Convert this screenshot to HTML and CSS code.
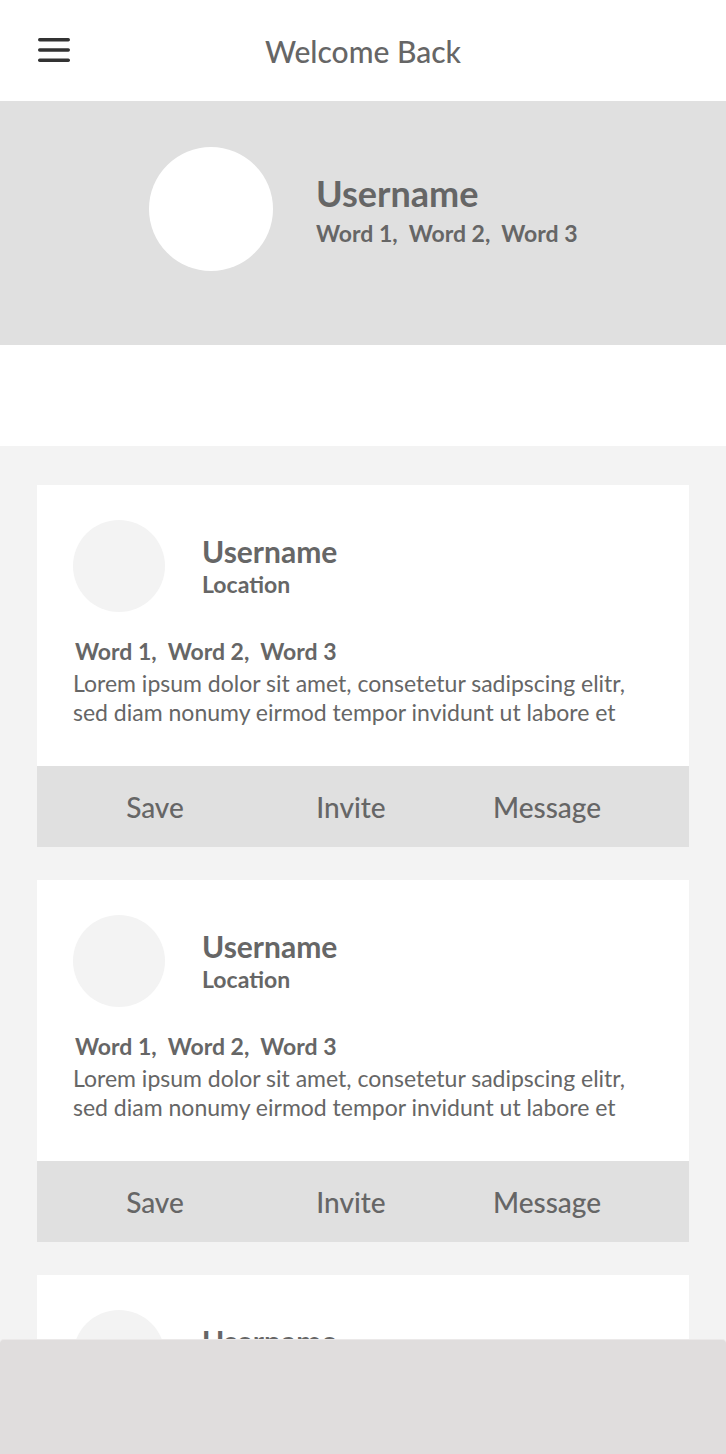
FILE: index.html
```html
<!DOCTYPE html>
<html lang="en">
<head>
  <meta charset="UTF-8" />
  <meta name="viewport" content="width=device-width, initial-scale=1.0" />
  <title>Welcome Back</title>
  <link rel="stylesheet" href="styles.css">
</head>
<body>
  <!-- Top bar -->
  <header class="topbar">
    <button class="menu-btn" aria-label="Menu">
      <svg width="32" height="26" viewBox="0 0 32 26">
        <rect x="0" y="1" width="32" height="3.4" rx="1.7" fill="#333" />
        <rect x="0" y="11.3" width="32" height="3.4" rx="1.7" fill="#333" />
        <rect x="0" y="21.6" width="32" height="3.4" rx="1.7" fill="#333" />
      </svg>
    </button>
    <div class="title">Welcome Back</div>
  </header>

  <!-- Profile -->
  <section class="profile">
    <div class="profile-avatar"></div>
    <div class="profile-info">
      <div class="profile-name">Username</div>
      <div class="profile-tags">Word 1,&nbsp; Word 2,&nbsp; Word 3</div>
    </div>
  </section>

  <div class="spacer"></div>

  <!-- Feed -->
  <main class="feed">
    <div class="card">
      <div class="card-body">
        <div class="card-head">
          <div class="avatar"></div>
          <div>
            <div class="name">Username</div>
            <div class="location">Location</div>
          </div>
        </div>
        <div class="tags">Word 1,&nbsp; Word 2,&nbsp; Word 3</div>
        <p class="desc">Lorem ipsum dolor sit amet, consetetur sadipscing elitr, sed diam nonumy eirmod tempor invidunt ut labore et</p>
      </div>
      <div class="actions">
        <span>Save</span>
        <span>Invite</span>
        <span>Message</span>
      </div>
    </div>

    <div class="card">
      <div class="card-body">
        <div class="card-head">
          <div class="avatar"></div>
          <div>
            <div class="name">Username</div>
            <div class="location">Location</div>
          </div>
        </div>
        <div class="tags">Word 1,&nbsp; Word 2,&nbsp; Word 3</div>
        <p class="desc">Lorem ipsum dolor sit amet, consetetur sadipscing elitr, sed diam nonumy eirmod tempor invidunt ut labore et</p>
      </div>
      <div class="actions">
        <span>Save</span>
        <span>Invite</span>
        <span>Message</span>
      </div>
    </div>

    <div class="card">
      <div class="card-body">
        <div class="card-head">
          <div class="avatar"></div>
          <div>
            <div class="name">Username</div>
            <div class="location">Location</div>
          </div>
        </div>
        <div class="tags">Word 1,&nbsp; Word 2,&nbsp; Word 3</div>
        <p class="desc">Lorem ipsum dolor sit amet, consetetur sadipscing elitr, sed diam nonumy eirmod tempor invidunt ut labore et</p>
      </div>
      <div class="actions">
        <span>Save</span>
        <span>Invite</span>
        <span>Message</span>
      </div>
    </div>
  </main>

  <!-- Bottom bar -->
  <footer class="bottombar"></footer>
</body>
</html>
```

FILE: styles.css
```css
body {
  margin: 0;
  font-family: Lato, "Open Sans", sans-serif;
  color: #666;
  background: #fff;
  overflow: hidden;
}

.topbar {
  position: relative;
  height: 101px;
  display: flex;
  align-items: center;
  justify-content: center;
  background: #fff;
}

.menu-btn {
  position: absolute;
  left: 38px;
  top: 37px;
  padding: 0;
  border: none;
  background: none;
  line-height: 0;
}

.title {
  font-size: 30px;
  font-weight: 500;
  color: #666;
}

.profile {
  height: 244px;
  box-sizing: border-box;
  padding: 46px 0 0 149px;
  display: flex;
  align-items: flex-start;
  gap: 43px;
  background: #e0e0e0;
}

.profile-avatar {
  width: 124px;
  height: 124px;
  border-radius: 50%;
  background: #fff;
  flex-shrink: 0;
}

.profile-info {
  padding-top: 26px;
}

.profile-name {
  font-size: 36px;
  font-weight: bold;
  line-height: 40px;
}

.profile-tags {
  font-size: 23px;
  font-weight: bold;
  line-height: 30px;
  margin-top: 5px;
}

.spacer {
  height: 101px;
}

.feed {
  background: #f3f3f3;
  padding: 39px 37px 40px;
  display: flex;
  flex-direction: column;
  gap: 33px;
}

.card {
  background: #fff;
}

.card-body {
  padding: 35px 36px 39px;
}

.card-head {
  display: flex;
  align-items: center;
  gap: 37px;
}

.avatar {
  width: 92px;
  height: 92px;
  border-radius: 50%;
  background: #f3f3f3;
  flex-shrink: 0;
}

.name {
  font-size: 30px;
  font-weight: bold;
  line-height: 34px;
}

.location {
  font-size: 23px;
  font-weight: bold;
  line-height: 28px;
  margin-top: 2px;
}

.tags {
  margin-top: 25px;
  font-size: 23px;
  font-weight: bold;
  line-height: 29px;
  padding-left: 2px;
}

.desc {
  margin: 3px 0 0;
  font-size: 23px;
  line-height: 29px;
}

.actions {
  height: 81px;
  background: #e0e0e0;
  display: grid;
  grid-template-columns: repeat(3, 196px);
  padding-left: 20px;
  align-items: center;
  font-size: 28px;
  font-weight: 500;
}

.actions span {
  text-align: center;
}

.bottombar {
  position: fixed;
  left: 0;
  right: 0;
  bottom: 0;
  height: 114px;
  background: #e0dddd;
  border-top: 1px solid #ebe9e9;
  border-radius: 4px 4px 0 0;
}
```
